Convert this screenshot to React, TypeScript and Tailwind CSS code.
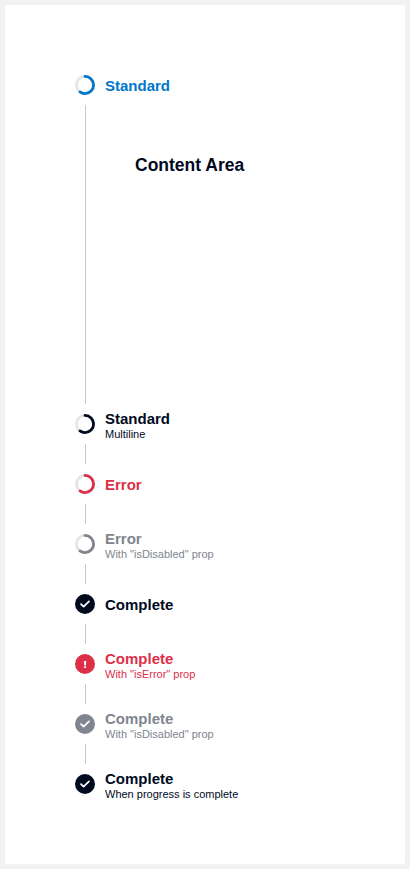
type Kind = "progress" | "check" | "alert";

interface Step {
  title: string;
  subtitle?: string;
  kind: Kind;
  color: string;
}

const steps: Step[] = [
  { title: "Standard", kind: "progress", color: "text-[#0077c8]" },
  { title: "Standard", subtitle: "Multiline", kind: "progress", color: "text-[#000a1e]" },
  { title: "Error", kind: "progress", color: "text-[#db3048]" },
  { title: "Error", subtitle: 'With "isDisabled" prop', kind: "progress", color: "text-[#80858f]" },
  { title: "Complete", kind: "check", color: "text-[#000a1e]" },
  { title: "Complete", subtitle: 'With "isError" prop', kind: "alert", color: "text-[#db3048]" },
  { title: "Complete", subtitle: 'With "isDisabled" prop', kind: "check", color: "text-[#80858f]" },
  { title: "Complete", subtitle: "When progress is complete", kind: "check", color: "text-[#000a1e]" },
];

function StepIcon({ kind }: { kind: Kind }) {
  if (kind === "progress") {
    return (
      <svg className="size-5 shrink-0" viewBox="0 0 20 20" fill="none" strokeWidth="2.8">
        <circle cx="10" cy="10" r="8.6" stroke="#e4e5e7" />
        <circle
          cx="10"
          cy="10"
          r="8.6"
          stroke="currentColor"
          strokeLinecap="round"
          pathLength="100"
          strokeDasharray="60 100"
          transform="rotate(-90 10 10)"
        />
      </svg>
    );
  }
  return (
    <svg className="size-5 shrink-0" viewBox="0 0 20 20" fill="none">
      <circle cx="10" cy="10" r="10" fill="currentColor" />
      {kind === "check" ? (
        <path
          d="M6 10.2 8.6 12.7 14 7.3"
          stroke="#fff"
          strokeWidth="1.7"
          strokeLinecap="round"
          strokeLinejoin="round"
        />
      ) : (
        <path d="M9 6.9h2.2l-.3 4.6H9.3zM9.2 12.3h1.8V14H9.2z" fill="#fff" />
      )}
    </svg>
  );
}

export default function App() {
  return (
    <div className="h-[869px] bg-[#f1f2f4] p-[5px] font-['Liberation_Sans',Arial,sans-serif] text-[#000a1e]">
      <main className="h-[859px] rounded-xs bg-white px-[70px] py-[60px]">
        {steps.map((step, i) => (
          <section key={i}>
            <div className={`flex h-10 items-center gap-2.5 ${step.color}`}>
              <StepIcon kind={step.kind} />
              <div className="whitespace-nowrap">
                <div className="pt-0.5 text-[15px] leading-[18px] font-bold">{step.title}</div>
                {step.subtitle && <div className="text-[11px] leading-3">{step.subtitle}</div>}
              </div>
            </div>
            {i < steps.length - 1 && (
              <div
                className={`ml-2.5 border-l border-[#c4c6cc] ${i === 0 ? "h-[299px] pt-[50px] pl-[49px]" : "h-5"}`}
              >
                {i === 0 && <h2 className="text-[17.5px] leading-5 font-bold">Content Area</h2>}
              </div>
            )}
          </section>
        ))}
      </main>
    </div>
  );
}
